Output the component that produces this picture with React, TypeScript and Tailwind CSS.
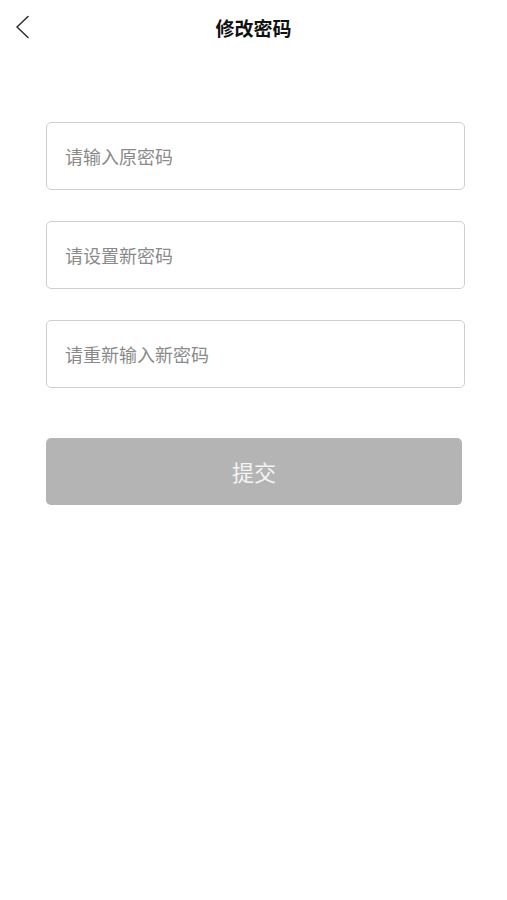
const FIELDS = ["请输入原密码", "请设置新密码", "请重新输入新密码"];

export default function App() {
  return (
    <div
      className="min-h-[900px] w-full bg-white"
      style={{ fontFamily: '"Noto Sans CJK SC", "Noto Sans", sans-serif' }}
    >
      {/* Header */}
      <div className="relative flex h-[56px] items-center justify-center">
        <button className="absolute left-[14px] top-[15px] text-[#333]">
          <svg width="16" height="24" viewBox="0 0 16 24" fill="none">
            <path d="M14 1.5 3 12l11 10.5" stroke="currentColor" strokeWidth="1.6" strokeLinecap="round" strokeLinejoin="round" />
          </svg>
        </button>
        <h1 className="text-[19px] font-bold text-[#111]">修改密码</h1>
      </div>

      {/* Form */}
      <div className="flex flex-col gap-[31px] pl-[46px] pr-[42px] pt-[66px]">
        {FIELDS.map((p) => (
          <input
            key={p}
            type="password"
            placeholder={p}
            className="h-[68px] w-full rounded-[5px] border border-[#cfcfcf] px-[18px] text-[18px] text-[#333] outline-none placeholder:text-[#8a8a8a]"
          />
        ))}
      </div>

      <div className="pl-[46px] pr-[45px] pt-[50px]">
        <button className="flex h-[67px] w-full items-center justify-center rounded-[5px] bg-[#b4b4b4] text-[22px] text-[#f4f4f4]">
          提交
        </button>
      </div>
    </div>
  );
}
